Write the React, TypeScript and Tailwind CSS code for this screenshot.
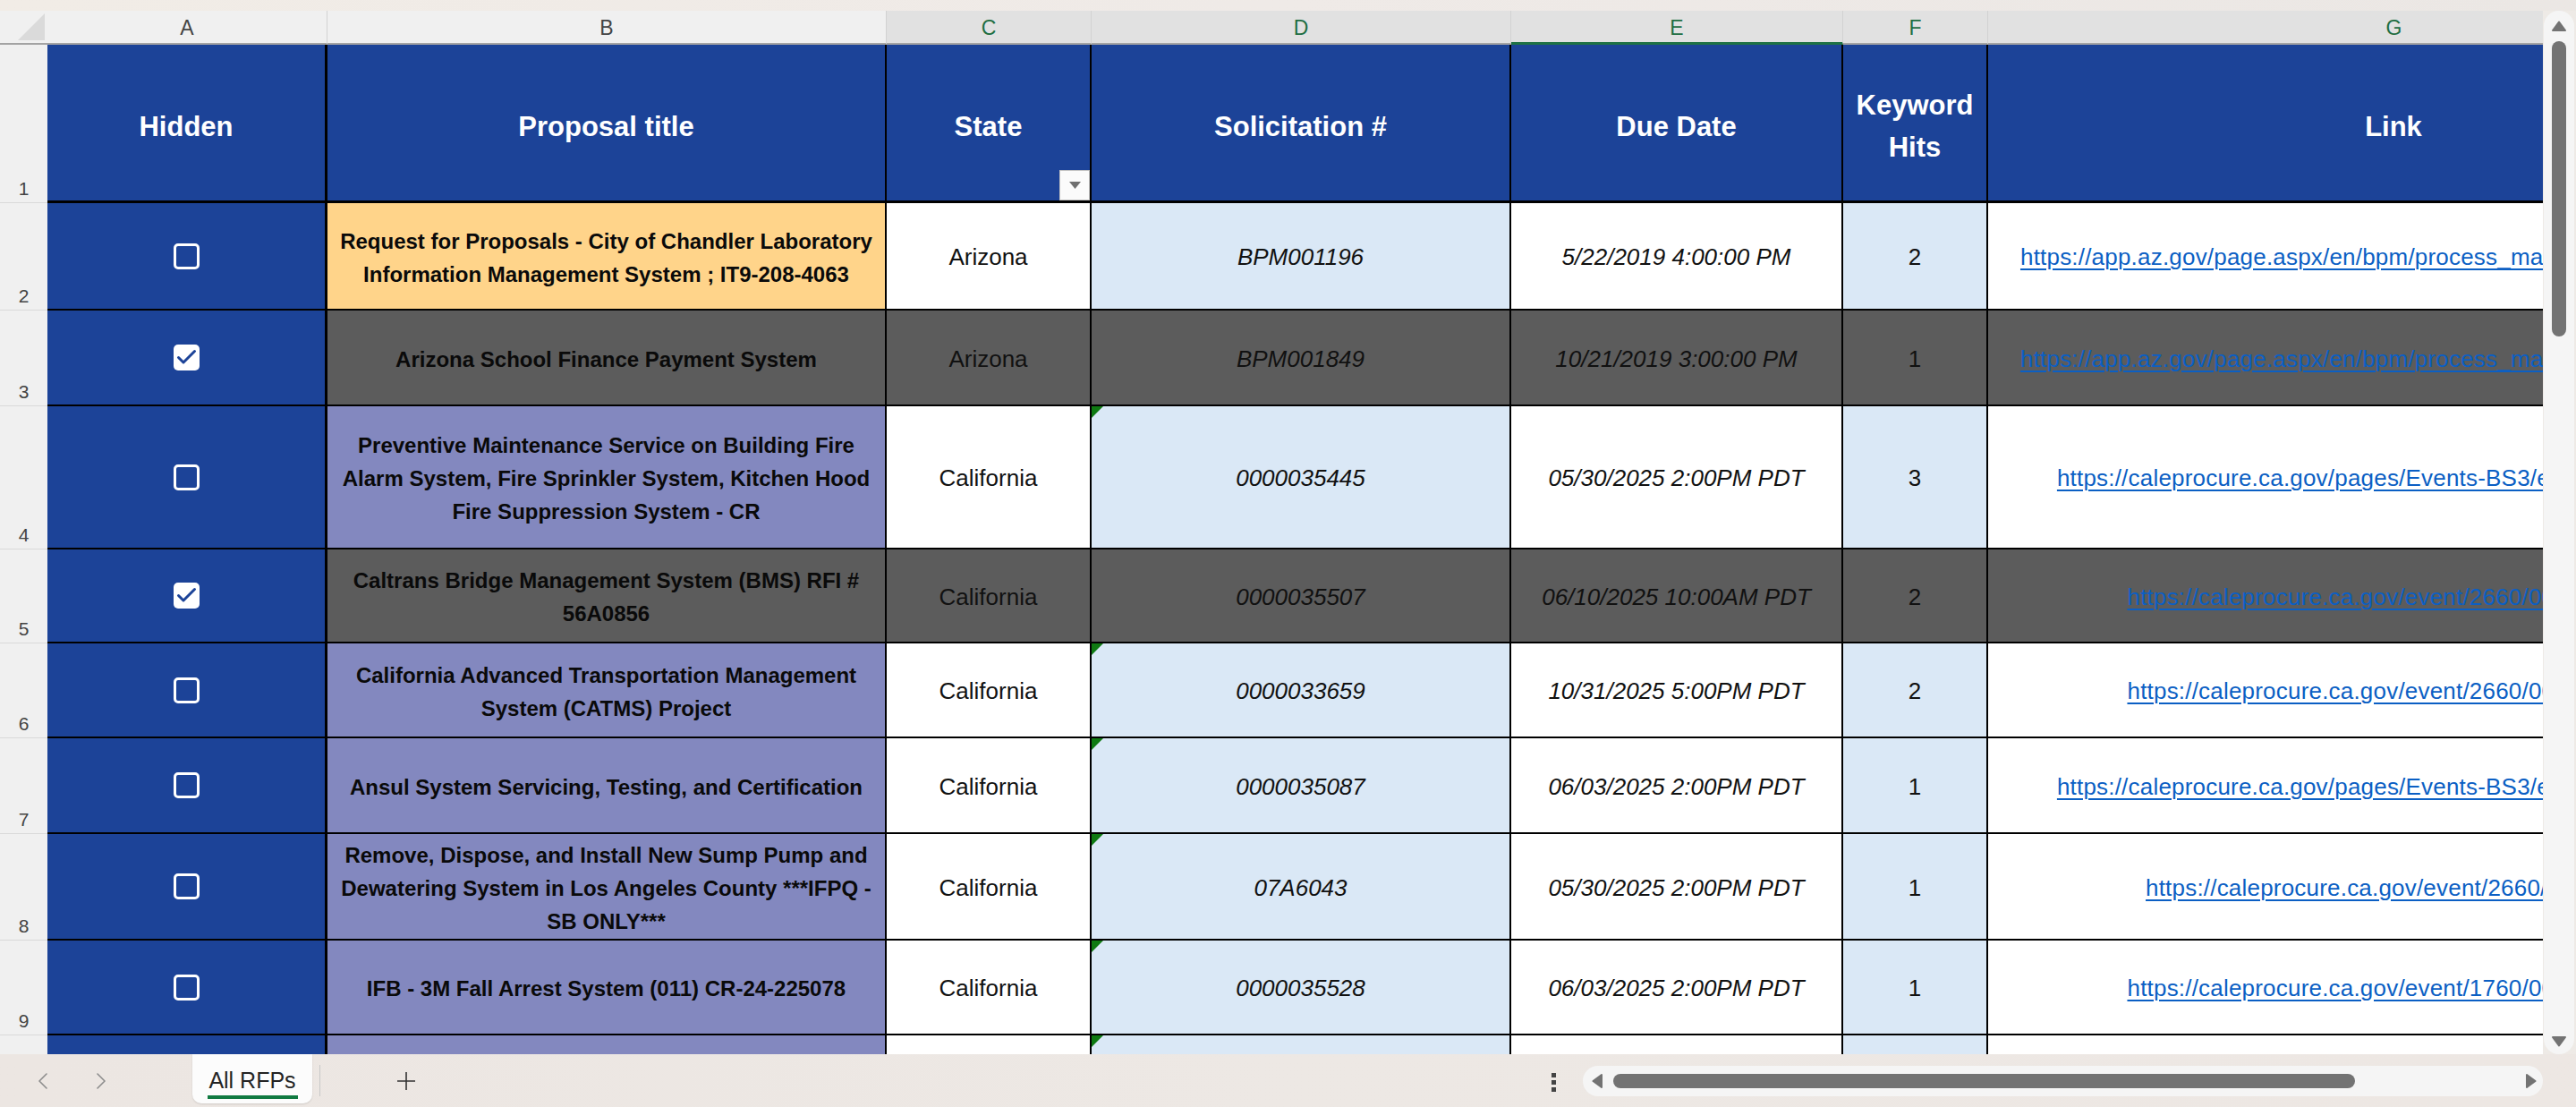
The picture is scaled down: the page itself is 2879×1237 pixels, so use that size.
import React from "react"

type Row = {
  n: number
  h: string
  checked: boolean
  hidden: boolean
  tone: "orange" | "purple"
  title: string[]
  state: string
  sol: string
  due: string
  hits: string
  link: string
  flag: boolean
}

const rows: Row[] = [
  {
    n: 2,
    h: "h-[120px]",
    checked: false,
    hidden: false,
    tone: "orange",
    title: ["Request for Proposals - City of Chandler Laboratory", "Information Management System ; IT9-208-4063"],
    state: "Arizona",
    sol: "BPM001196",
    due: "5/22/2019 4:00:00 PM",
    hits: "2",
    link: "https://app.az.gov/page.aspx/en/bpm/process_manage_extranet/40188",
    flag: false,
  },
  {
    n: 3,
    h: "h-[107px]",
    checked: true,
    hidden: true,
    tone: "purple",
    title: ["Arizona School Finance Payment System"],
    state: "Arizona",
    sol: "BPM001849",
    due: "10/21/2019 3:00:00 PM",
    hits: "1",
    link: "https://app.az.gov/page.aspx/en/bpm/process_manage_extranet/52471",
    flag: false,
  },
  {
    n: 4,
    h: "h-[160px]",
    checked: false,
    hidden: false,
    tone: "purple",
    title: [
      "Preventive Maintenance Service on Building Fire",
      "Alarm System, Fire Sprinkler System, Kitchen Hood",
      "Fire Suppression System - CR",
    ],
    state: "California",
    sol: "0000035445",
    due: "05/30/2025 2:00PM PDT",
    hits: "3",
    link: "https://caleprocure.ca.gov/pages/Events-BS3/event-search.aspx",
    flag: true,
  },
  {
    n: 5,
    h: "h-[105px]",
    checked: true,
    hidden: true,
    tone: "purple",
    title: ["Caltrans Bridge Management System (BMS) RFI #", "56A0856"],
    state: "California",
    sol: "0000035507",
    due: "06/10/2025 10:00AM PDT",
    hits: "2",
    link: "https://caleprocure.ca.gov/event/2660/0000035507",
    flag: false,
  },
  {
    n: 6,
    h: "h-[106px]",
    checked: false,
    hidden: false,
    tone: "purple",
    title: ["California Advanced Transportation Management", "System (CATMS) Project"],
    state: "California",
    sol: "0000033659",
    due: "10/31/2025 5:00PM PDT",
    hits: "2",
    link: "https://caleprocure.ca.gov/event/2660/0000033659",
    flag: true,
  },
  {
    n: 7,
    h: "h-[107px]",
    checked: false,
    hidden: false,
    tone: "purple",
    title: ["Ansul System Servicing, Testing, and Certification"],
    state: "California",
    sol: "0000035087",
    due: "06/03/2025 2:00PM PDT",
    hits: "1",
    link: "https://caleprocure.ca.gov/pages/Events-BS3/event-search.aspx",
    flag: true,
  },
  {
    n: 8,
    h: "h-[119px]",
    checked: false,
    hidden: false,
    tone: "purple",
    title: [
      "Remove, Dispose, and Install New Sump Pump and",
      "Dewatering System in Los Angeles County ***IFPQ -",
      "SB ONLY***",
    ],
    state: "California",
    sol: "07A6043",
    due: "05/30/2025 2:00PM PDT",
    hits: "1",
    link: "https://caleprocure.ca.gov/event/2660/07A6043",
    flag: true,
  },
  {
    n: 9,
    h: "h-[106px]",
    checked: false,
    hidden: false,
    tone: "purple",
    title: ["IFB - 3M Fall Arrest System (011) CR-24-225078"],
    state: "California",
    sol: "0000035528",
    due: "06/03/2025 2:00PM PDT",
    hits: "1",
    link: "https://caleprocure.ca.gov/event/1760/0000035528",
    flag: true,
  },
  {
    n: 10,
    h: "h-[107px]",
    checked: false,
    hidden: false,
    tone: "purple",
    title: [""],
    state: "",
    sol: "",
    due: "",
    hits: "",
    link: "",
    flag: true,
  },
]

const letters = [
  { l: "A", w: "w-[313px]", sel: false, active: false },
  { l: "B", w: "w-[625px]", sel: false, active: false },
  { l: "C", w: "w-[229px]", sel: true, active: false },
  { l: "D", w: "w-[469px]", sel: true, active: false },
  { l: "E", w: "w-[371px]", sel: true, active: true },
  { l: "F", w: "w-[162px]", sel: true, active: false },
  { l: "G", w: "w-[908px]", sel: true, active: false },
]

function Checkbox({ checked }: { checked: boolean }) {
  if (checked) {
    return (
      <div className="w-[29px] h-[29px] rounded-[5px] bg-white">
        <svg width="29" height="29" viewBox="0 0 29 29">
          <path d="M5.5 14.5 L11 20 L23.5 7.5" fill="none" stroke="#1c4398" strokeWidth="3" strokeLinecap="round" strokeLinejoin="round" />
        </svg>
      </div>
    )
  }
  return <div className="w-[29px] h-[29px] rounded-[5px] border-[3px] border-white" />
}

function Flag() {
  return (
    <svg className="absolute top-0 left-0" width="13" height="13" viewBox="0 0 13 13">
      <polygon points="0,0 13,0 0,13" fill="#0f7a12" />
    </svg>
  )
}

function Triangle({ dir }: { dir: "up" | "down" | "left" | "right" }) {
  const pts = {
    up: "8,1.5 15,11 1,11",
    down: "1,1 15,1 8,10.5",
    left: "11,1 11,15 1.5,8",
    right: "1,1 1,15 10.5,8",
  }[dir]
  const box = dir === "up" || dir === "down" ? { w: 16, h: 12 } : { w: 12, h: 16 }
  return (
    <svg width={box.w} height={box.h} viewBox={`0 0 ${box.w} ${box.h}`}>
      <polygon points={pts} fill="#737373" stroke="#737373" strokeWidth="2" strokeLinejoin="round" />
    </svg>
  )
}

function ColumnHeaders() {
  return (
    <div className="flex h-[38px] shrink-0">
      <div className="w-[53px] shrink-0 bg-[#f0f0f0] border-b-2 border-[#a3a3a3] flex items-center justify-end pr-[3px]">
        <svg width="30" height="30" viewBox="0 0 30 30">
          <polygon points="30,0 30,30 0,30" fill="#dadada" />
        </svg>
      </div>
      {letters.map((c) => (
        <div
          key={c.l}
          className={`${c.w} shrink-0 flex items-center justify-center border-r border-[#d2d2d2] text-[23px] pt-[3px] ${
            c.sel ? "bg-[#e1e1e1] text-[#1e6e42]" : "bg-[#f0f0f0] text-[#444444]"
          } ${c.active ? "border-b-[3px] border-b-[#1e7145]" : "border-b-2 border-b-[#a3a3a3]"}`}
        >
          {c.l}
        </div>
      ))}
    </div>
  )
}

function HeaderRow() {
  const cell =
    "shrink-0 bg-[#1c4398] border-b-[3px] border-black flex items-center justify-center text-center text-white font-bold text-[31px] leading-[47px] pt-[8px]"
  return (
    <div className="flex h-[177px] shrink-0">
      <div className="w-[53px] shrink-0 bg-[#f0f0f0] border-b border-[#d9d9d9] flex items-end justify-center pb-[5px] text-[21px] leading-[21px] text-[#444444]">
        1
      </div>
      <div className={`${cell} w-[313px] border-r-[3px]`}>Hidden</div>
      <div className={`${cell} w-[625px] border-r-2`}>Proposal title</div>
      <div className={`${cell} w-[229px] border-r-2 relative`}>
        State
        <div className="absolute right-0 bottom-0 w-[34px] h-[34px] bg-[#fbfbfb] border border-[#c4c4c4] flex items-center justify-center">
          <svg width="13" height="8" viewBox="0 0 13 8">
            <polygon points="0,0 13,0 6.5,8" fill="#707070" />
          </svg>
        </div>
      </div>
      <div className={`${cell} w-[469px] border-r-2`}>Solicitation #</div>
      <div className={`${cell} w-[371px] border-r-2`}>Due Date</div>
      <div className={`${cell} w-[162px] border-r-2 flex-col`}>
        <span>Keyword</span>
        <span>Hits</span>
      </div>
      <div className={`${cell} w-[908px] border-r-2`}>Link</div>
    </div>
  )
}

function DataRow({ r }: { r: Row }) {
  const base = "shrink-0 border-r-2 border-b-2 border-black flex items-center justify-center text-center pt-[3px]"
  const gray = "bg-[#5c5c5c]"
  const titleBg = r.hidden ? gray : r.tone === "orange" ? "bg-[#ffd48a]" : "bg-[#8388bf]"
  const white = r.hidden ? gray : "bg-white"
  const blue = r.hidden ? gray : "bg-[#dae8f6]"
  return (
    <div className={`flex shrink-0 ${r.h}`}>
      <div className="w-[53px] shrink-0 bg-[#f0f0f0] border-b border-[#d9d9d9] flex items-end justify-center pb-[5px] text-[21px] leading-[21px] text-[#444444]">
        {r.n}
      </div>
      <div className="w-[313px] shrink-0 bg-[#1c4398] border-r-[3px] border-b-2 border-black flex items-center justify-center">
        {r.n < 10 && <Checkbox checked={r.checked} />}
      </div>
      <div className={`${base} ${titleBg} w-[625px] font-bold text-[24px] leading-[37px] text-[#0a0a0a]`}>
        <div className="flex flex-col items-center">
          {r.title.map((t, i) => (
            <span key={i} className="whitespace-nowrap">
              {t}
            </span>
          ))}
        </div>
      </div>
      <div className={`${base} ${white} w-[229px] text-[26px] text-[#111111]`}>{r.state}</div>
      <div className={`${base} ${blue} w-[469px] relative italic text-[26px] text-[#111111]`}>
        {r.flag && <Flag />}
        {r.sol}
      </div>
      <div className={`${base} ${white} w-[371px] italic text-[26px] text-[#111111] whitespace-nowrap`}>{r.due}</div>
      <div className={`${base} ${blue} w-[162px] text-[26px] text-[#111111]`}>{r.hits}</div>
      <div className={`${base} ${white} w-[908px] text-[26px]`}>
        <a className="whitespace-nowrap text-[#0b5fc4] underline underline-offset-[4px] decoration-[2px] tracking-[0.2px]">{r.link}</a>
      </div>
    </div>
  )
}

function VerticalScroll() {
  return (
    <div className="w-[37px] shrink-0 pl-[1px] bg-[#eeeae6]">
      <div className="w-[34px] h-full rounded-full bg-[#f5f5f5] flex flex-col items-center pt-[11px] pb-[8px]">
        <Triangle dir="up" />
        <div className="mt-[11px] w-[16px] h-[330px] rounded-full bg-[#737373]" />
        <div className="flex-1" />
        <Triangle dir="down" />
      </div>
    </div>
  )
}

function Chevron({ left }: { left: boolean }) {
  return (
    <svg width="14" height="18" viewBox="0 0 14 18">
      <polyline
        points={left ? "11,1 3,9 11,17" : "3,1 11,9 3,17"}
        fill="none"
        stroke="#8c8c8c"
        strokeWidth="1.6"
        strokeLinecap="round"
        strokeLinejoin="round"
      />
    </svg>
  )
}

function BottomBar() {
  return (
    <div className="h-[59px] shrink-0 flex items-center bg-gradient-to-r from-[#ece6e2] via-[#ede8e4] to-[#ede7e3]">
      <div className="ml-[41px]">
        <Chevron left />
      </div>
      <div className="ml-[51px]">
        <Chevron left={false} />
      </div>
      <div className="ml-[95px] self-start w-[134px] h-[55px] bg-[#fcfcfc] rounded-b-[10px] shadow-[0_1px_2px_rgba(0,0,0,0.12)] flex flex-col items-center pt-[14px]">
        <span className="text-[25px] leading-[30px] text-[#242424] whitespace-nowrap">All RFPs</span>
        <div className="mt-[2px] w-[101px] h-[4px] bg-[#117a41]" />
      </div>
      <div className="ml-[8px] w-px h-[35px] bg-[#c8c8c8]" />
      <div className="ml-[85px]">
        <svg width="22" height="22" viewBox="0 0 22 22">
          <path d="M11 1 V21 M1 11 H21" stroke="#333333" strokeWidth="1.6" fill="none" />
        </svg>
      </div>
      <div className="ml-[1269px] flex flex-col gap-[3px] pt-[3px]">
        <div className="w-[5px] h-[5px] bg-[#444444]" />
        <div className="w-[5px] h-[5px] bg-[#444444]" />
        <div className="w-[5px] h-[5px] bg-[#444444]" />
      </div>
      <div className="ml-[30px] w-[1073px] h-[34px] rounded-full bg-[#f5f5f5] flex items-center pl-[10px] pr-[7px]">
        <Triangle dir="left" />
        <div className="ml-[12px] w-[829px] h-[16px] rounded-full bg-[#737373]" />
        <div className="flex-1" />
        <Triangle dir="right" />
      </div>
    </div>
  )
}

export default function App() {
  return (
    <div className="w-[2879px] h-[1237px] overflow-hidden flex flex-col bg-[#eeeae6] font-['Liberation_Sans',Arial,sans-serif]">
      <div className="h-[12px] shrink-0 bg-gradient-to-r from-[#f1ece6] via-[#efeae7] to-[#ebe7e4]" />
      <div className="h-[1166px] shrink-0 flex">
        <div className="w-[2842px] shrink-0 overflow-hidden flex flex-col bg-white">
          <ColumnHeaders />
          <HeaderRow />
          {rows.map((r) => (
            <DataRow key={r.n} r={r} />
          ))}
        </div>
        <VerticalScroll />
      </div>
      <BottomBar />
    </div>
  )
}
